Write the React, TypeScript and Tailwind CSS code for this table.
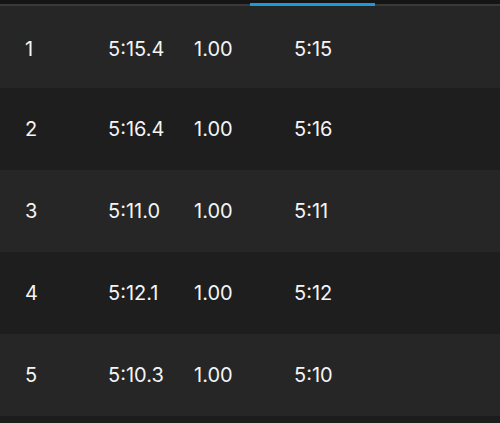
import React from "react";

const rows = [
  ["1", "5:15.4", "1.00", "5:15"],
  ["2", "5:16.4", "1.00", "5:16"],
  ["3", "5:11.0", "1.00", "5:11"],
  ["4", "5:12.1", "1.00", "5:12"],
  ["5", "5:10.3", "1.00", "5:10"],
];

export default function App() {
  return (
    <div
      className="w-[500px] h-[423px] bg-[#1c1c1c] overflow-hidden text-[#f4f4f4]"
      style={{ fontFamily: "Inter, 'Open Sans', sans-serif" }}
    >
      <div className="relative h-[6px] bg-[#151515]">
        <div className="absolute left-0 right-0 top-[4px] h-[2px] bg-[#3a3a3a]" />
        <div className="absolute left-[250px] w-[125px] top-[3px] h-[3px] bg-[#1c9ad8]" />
      </div>
      {rows.map((r, i) => (
        <div
          key={i}
          className={`flex items-center h-[82px] pl-[25px] text-[20px] ${
            i === 0 ? "pt-[4px]" : "pt-0"
          } ${i % 2 === 0 ? "bg-[#262626]" : "bg-[#1e1e1e]"}`}
        >
          <div className="w-[83px]">{r[0]}</div>
          <div className="w-[86px]">{r[1]}</div>
          <div className="w-[100px]">{r[2]}</div>
          <div>{r[3]}</div>
        </div>
      ))}
    </div>
  );
}
